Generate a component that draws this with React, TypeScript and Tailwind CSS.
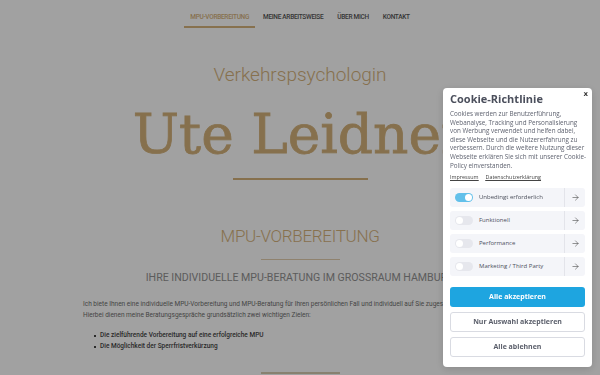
import React from "react";
import { ArrowRight } from "lucide-react";

const navItems = ["MPU-VORBEREITUNG", "MEINE ARBEITSWEISE", "ÜBER MICH", "KONTAKT"];

const cookieGroups = [
  { label: "Unbedingt erforderlich", on: true },
  { label: "Funktionell", on: false },
  { label: "Performance", on: false },
  { label: "Marketing / Third Party", on: false },
];

const policyLines = [
  "Cookies werden zur Benutzerführung,",
  "Webanalyse, Tracking und Personalisierung",
  "von Werbung verwendet und helfen dabei,",
  "diese Webseite und die Nutzererfahrung zu",
  "verbessern. Durch die weitere Nutzung dieser",
  "Webseite erklären Sie sich mit unserer Cookie-",
  "Policy einverstanden.",
];

function CookieBanner() {
  return (
    <div className="fixed right-[8px] top-[88px] w-[149px] rounded-[4px] bg-white px-[7px] pt-[4px] pb-[10px] font-['Open_Sans',sans-serif] shadow-[0_2px_8px_rgba(0,0,0,0.15)]">
      <button className="absolute right-[4px] top-[3px] font-['DejaVu_Sans',sans-serif] text-[7px] font-bold leading-none text-[#333]">
        x
      </button>
      <h2 className="text-[11px] font-bold leading-[14px] text-[#4b4f5c]">Cookie-Richtlinie</h2>
      <div className="mt-[4px] text-[6.3px] text-[#5f6370]">
        {policyLines.map((line) => (
          <p key={line} className="h-[8.6px] whitespace-nowrap leading-[8.6px]">
            {line}
          </p>
        ))}
      </div>
      <div className="mt-[3px] flex gap-[7px] text-[5.4px] leading-[8px] text-[#444] underline">
        <a>Impressum</a>
        <a>Datenschutzerklärung</a>
      </div>

      <div className="mt-[7px] flex flex-col gap-[4px]">
        {cookieGroups.map((g) => (
          <div key={g.label} className="flex h-[19px] items-center rounded-[3px] bg-[#f4f5f9]">
            <div className="flex flex-1 items-center gap-[6px] pl-[5px]">
              <span
                className={
                  g.on
                    ? "flex h-[9px] w-[18px] items-center justify-end rounded-full bg-[#62c0ea] p-[1px]"
                    : "flex h-[9px] w-[18px] items-center justify-start rounded-full bg-[#e6e7ed] p-[1px]"
                }
              >
                <span className="h-[7px] w-[7px] rounded-full bg-white" />
              </span>
              <span className="text-[6px] text-[#4c505c]">{g.label}</span>
            </div>
            <div className="flex h-full w-[21px] items-center justify-center border-l border-[#e3e4ea] text-[#444]">
              <ArrowRight size={9} strokeWidth={1.5} />
            </div>
          </div>
        ))}
      </div>

      <div className="mt-[11px] flex flex-col gap-[5px] text-[7px] font-bold">
        <button className="h-[20px] rounded-[3px] bg-[#1ea5e0] text-white">Alle akzeptieren</button>
        <button className="h-[20px] rounded-[3px] border border-[#d9dbe2] bg-white text-[#5a5e6a]">
          Nur Auswahl akzeptieren
        </button>
        <button className="h-[20px] rounded-[3px] border border-[#d9dbe2] bg-white text-[#5a5e6a]">
          Alle ablehnen
        </button>
      </div>
    </div>
  );
}

export default function App() {
  return (
    <div className="relative h-[375px] w-[600px] overflow-hidden bg-white font-['Roboto',sans-serif]">
      <header className="flex justify-center gap-[2px] pt-[12px]">
        {navItems.map((item, i) => (
          <a
            key={item}
            className={
              i === 0
                ? "border-b-2 border-[#d6b37c] px-[6px] pb-[4px] text-[6.5px] font-medium leading-[10px] tracking-[-0.3px] text-[#d6b37c]"
                : "border-b-2 border-transparent px-[6px] pb-[4px] text-[6.5px] font-medium leading-[10px] tracking-[-0.3px] text-[#555]"
            }
          >
            {item}
          </a>
        ))}
      </header>

      <main className="mx-auto flex w-[434px] flex-col items-center">
        <p className="mt-[35px] text-[19px] font-light leading-[24px] text-[#d6b37c]">Verkehrspsychologin</p>
        <h1 className="mt-[17px] whitespace-nowrap font-['DejaVu_Serif',serif] text-[55px] leading-[60px] text-[#d4b27b] [-webkit-text-stroke:0.8px_#d4b27b]">
          Ute Leidner
        </h1>
        <div className="mt-[14px] h-[2px] w-[135px] bg-[#d4b27b]" />

        <h2 className="mt-[45px] text-[17px] font-light leading-[22px] tracking-[-0.3px] text-[#d6b37c]">
          MPU-VORBEREITUNG
        </h2>
        <div className="mt-[12px] h-px w-[79px] bg-[#e3cfae]" />
        <h3 className="mt-[11px] whitespace-nowrap text-[10.6px] leading-[14px] text-[#929292]">
          IHRE INDIVIDUELLE MPU-BERATUNG IM GROSSRAUM HAMBURG
        </h3>

        <div className="mt-[14px] w-full text-[6.5px] leading-[11px]">
          <p className="whitespace-nowrap text-[#6e6e6e]">
            Ich biete Ihnen eine individuelle MPU-Vorbereitung und MPU-Beratung für Ihren persönlichen Fall und
            individuell auf Sie zugeschnitten an.
            <br />
            Hierbei dienen meine Beratungsgespräche grundsätzlich zwei wichtigen Zielen:
          </p>
          <ul className="mt-[9px] pl-[11px] font-medium text-[#444]">
            <li className="flex items-center gap-[4px]">
              <span className="h-[2px] w-[2px] bg-[#444]" />
              Die zielführende Vorbereitung auf eine erfolgreiche MPU
            </li>
            <li className="flex items-center gap-[4px]">
              <span className="h-[2px] w-[2px] bg-[#444]" />
              Die Möglichkeit der Sperrfristverkürzung
            </li>
          </ul>
        </div>

        <div className="mt-[20px] h-[2px] w-[79px] bg-[#d8ccb2]" />
      </main>

      <div className="fixed inset-0 bg-black/[0.37]" />
      <CookieBanner />
    </div>
  );
}
